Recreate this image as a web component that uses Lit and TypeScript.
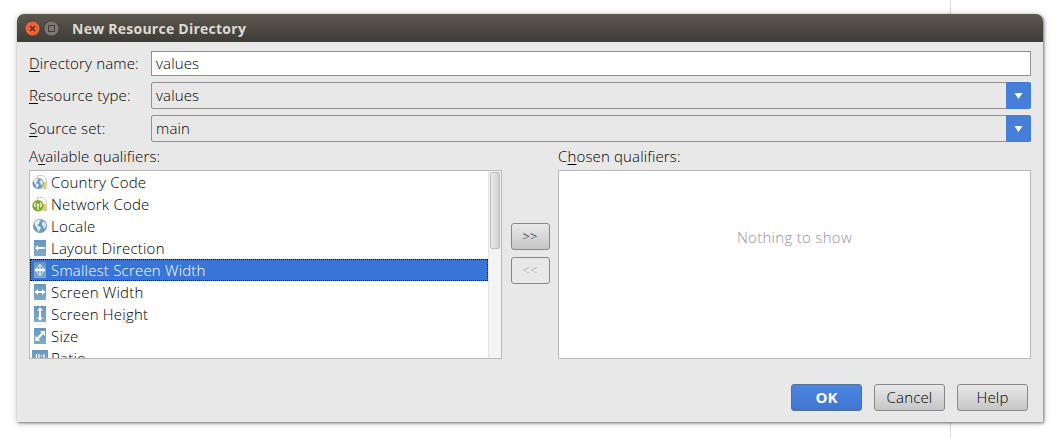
import { html, svg, css, LitElement, nothing } from 'lit';
import { customElement, property } from 'lit/decorators.js';
import { classMap } from 'lit/directives/class-map.js';

const globe = svg`
  <circle cx="8" cy="8" r="7" fill="#6d9cc3" />
  <path d="M2.6 4.4 5 2.3l3-.6.6 1.3-1.8 1 .8 1.2-2.2 1.4.6 1.4 2 .8 1 1.4-1.6 1.8-.6 2-1.2-1.6-.4-2.6L3.2 7.600z" fill="#eef4f8" />
  <path d="M10.200 4.600 12 3.600l1.600 2 .5 2.600-1.300 2.300-1.200-.4-.4-2-1.400-1z" fill="#dce8f1" />
`;
const card = svg`
  <path d="M5.5 1.5h5.600l3.400 3.400v9.600h-9z" fill="#fff" stroke="#cfcfcf" />
  <path d="M11 8h3v6.200h-3z" fill="#f4c822" />
  <path d="M11 10h3M11 12h3" stroke="#fff0a0" stroke-width=".6" />
`;
const tile = svg`<path d="M2 0h12v16H2z" fill="url(#tile)" />`;

const icons = {
  country: svg`${card}<g transform="translate(-.3 3) scale(.8)">${globe}</g>`,
  network: svg`${card}
    <circle cx="6" cy="9.800" r="5.700" fill="#86a830" />
    <circle cx="6" cy="9" r="1.200" fill="#fff" />
    <path d="M6 9.500v4.500M3.700 11.200a3.200 3.200 0 0 1 0-4.400M8.300 11.200a3.200 3.200 0 0 0 0-4.400" fill="none" stroke="#fff" stroke-width="1.100" />`,
  locale: globe,
  direction: svg`${tile}<path d="M3 8l3-3v2h7v2H6v2z" fill="#fff" />`,
  smallest: svg`${tile}
    <path d="M8 1.500l3 3H9v7h2l-3 3-3-3h2v-7H5z" fill="#c2d6e6" />
    <path d="M2.500 8l3-3v2h5V5l3 3-3 3V9h-5v2z" fill="#fff" />`,
  width: svg`${tile}<path d="M2.700 8l3-3v2h4.600V5l3 3-3 3V9H5.700v2z" fill="#fff" />`,
  height: svg`${tile}<path d="M8 1.300l3 3.200H9v7h2l-3 3.200-3-3.200h2v-7H5z" fill="#fff" />`,
  size: svg`${tile}<path d="M13 3v5l-1.800-1.700-4.600 4.600 1.700 1.800h-5v-5L5 9.400l4.600-4.600L7.800 3z" fill="#fff" />`,
  ratio: svg`
    <path d="M0 0h16v16H0z" fill="url(#tile)" />
    <path d="M4.500 4v7M7 4v7M12 4v7M9.500 5v1.500M9.500 8.500V10" stroke="#fff" stroke-width="1.200" />`,
};

interface Qualifier {
  icon: keyof typeof icons;
  label: string;
}

const qualifiers: Qualifier[] = [
  { icon: 'country', label: 'Country Code' },
  { icon: 'network', label: 'Network Code' },
  { icon: 'locale', label: 'Locale' },
  { icon: 'direction', label: 'Layout Direction' },
  { icon: 'smallest', label: 'Smallest Screen Width' },
  { icon: 'width', label: 'Screen Width' },
  { icon: 'height', label: 'Screen Height' },
  { icon: 'size', label: 'Size' },
  { icon: 'ratio', label: 'Ratio' },
];

@customElement('qualifier-list')
export class QualifierList extends LitElement {
  static styles = css`
    :host {
      display: grid;
      grid-template-columns: 1fr 13px;
      box-sizing: border-box;
      height: 189px;
      border: 1px solid #b9b9b9;
      background: #fff;
      letter-spacing: 0.21px;
      overflow: hidden;
    }

    .rows {
      overflow: hidden;
    }

    .row {
      display: flex;
      align-items: center;
      gap: 3px;
      box-sizing: border-box;
      height: 22px;
      padding: 0 1px;
      border: 1px solid transparent;
      white-space: nowrap;
    }

    .row.selected {
      background: #3875d7;
      border: 1px dotted #00091f;
      color: #fff;
    }

    .row svg {
      width: 16px;
      height: 16px;
      flex: none;
    }

    .track {
      box-sizing: border-box;
      padding: 1px;
      background: #f4f4f4;
      border-left: 1px solid #e4e4e4;
    }

    .thumb {
      box-sizing: border-box;
      height: 77px;
      border: 1px solid #bdbdbd;
      border-radius: 2px;
      background: linear-gradient(90deg, #ececec, #cfcfcf);
    }
  `;

  @property() selected = '';

  protected render() {
    return html`
      <div class="rows">
        ${qualifiers.map(
          ({ icon, label }) => html`
            <div class=${classMap({ row: true, selected: label === this.selected })}>
              <svg viewBox="0 0 16 16">
                <linearGradient id="tile" x2="0" y2="1">
                  <stop stop-color="#6a96bd" />
                  <stop offset="1" stop-color="#7fabcb" />
                </linearGradient>
                ${icons[icon]}
              </svg>
              <span>${label}</span>
            </div>
          `
        )}
      </div>
      <div class="track"><div class="thumb"></div></div>
    `;
  }
}

@customElement('app-root')
export class AppRoot extends LitElement {
  static styles = css`
    :host {
      display: block;
      box-sizing: border-box;
      height: 438px;
      padding: 14px 18px 16px 17px;
      background: linear-gradient(#dcdcdc, #dcdcdc) 950px 0 / 1px 100% no-repeat #fff;
      color: #000;
      font: 300 15px/22px 'Open Sans', sans-serif;
      letter-spacing: 0.15px;
    }

    .dialog {
      height: 408px;
      border-radius: 7px 7px 0 0;
      background: #e8e8e8;
      box-shadow: 1px 1px 3px rgb(0 0 0 / 50%), 0 1px 8px rgb(0 0 0 / 18%);
    }

    .titlebar {
      display: flex;
      align-items: center;
      box-sizing: border-box;
      height: 28px;
      padding: 2px 0 0 8px;
      border-radius: 7px 7px 0 0;
      background: linear-gradient(#5c584e, #3d3c37);
      color: #dfdbd2;
      font-size: 14px;
      font-weight: 700;
      letter-spacing: 0.25px;
    }

    .titlebar svg {
      width: 36px;
      height: 18px;
      margin: -2px 11px 0 0;
    }

    .form {
      display: grid;
      grid-template-columns: 122px 880px;
      row-gap: 6px;
      padding: 9px 12px 0;
    }

    .label {
      align-self: center;
      padding-bottom: 2px;
    }

    .field {
      display: flex;
      justify-content: space-between;
      box-sizing: border-box;
      height: 27px;
      padding-left: 4px;
      border: 1px solid #919191;
      border-radius: 2px;
      line-height: 25px;
    }

    .field.text {
      height: 25px;
      border-radius: 0;
      background: #fff;
      line-height: 23px;
    }

    .arrow {
      display: grid;
      place-items: center;
      width: 25px;
      margin: -1px;
      border-radius: 0 2px 2px 0;
      background: #477ed8;
    }

    .arrow svg {
      width: 9px;
      height: 6px;
    }

    .lists {
      display: grid;
      grid-template-columns: 473px 39px 473px;
      justify-content: space-between;
      padding: 3px 12px 0;
    }

    .caption {
      height: 25px;
    }

    .transfer {
      display: grid;
      align-content: start;
      gap: 7px;
      padding-top: 78px;
    }

    .chosen {
      display: grid;
      place-items: center;
      box-sizing: border-box;
      height: 189px;
      padding-bottom: 56px;
      border: 1px solid #b9b9b9;
      background: #fff;
      color: #9b8fa0;
      letter-spacing: 0.3px;
    }

    .button {
      box-sizing: border-box;
      height: 27px;
      border: 1px solid #888;
      border-radius: 3px;
      background: linear-gradient(#e9e9e9, #c6c6c6);
      line-height: 25px;
      text-align: center;
    }

    .button.small {
      font-size: 13px;
    }

    .button.disabled {
      background: #e8e8e8;
      color: #999;
      text-shadow: 1px 1px #fff;
    }

    .button.primary {
      border-color: #566f96;
      background: linear-gradient(#4a85e2, #4076cf);
      color: #fff;
      font-weight: 700;
    }

    .actions {
      display: grid;
      grid-template-columns: repeat(3, 71px);
      justify-content: end;
      gap: 12px;
      padding: 25px 15px 0;
    }

    u {
      text-decoration-thickness: 1px;
      text-underline-offset: 2px;
      text-decoration-skip-ink: none;
    }
  `;

  private field(key: string, rest: string, value: string, select = true) {
    return html`
      <div class="label"><u>${key}</u>${rest}</div>
      <div class=${classMap({ field: true, text: !select })}>
        <span>${value}</span>
        ${select
          ? html`<span class="arrow"><svg viewBox="0 0 9 6"><path d="M.5 0h8l-4 6z" fill="#fff" /></svg></span>`
          : nothing}
      </div>
    `;
  }

  protected render() {
    return html`
      <div class="dialog">
        <div class="titlebar">
          <svg viewBox="0 0 36 18">
            <circle cx="7.5" cy="9.5" r="7.5" fill="#ed6138" stroke="#34332e" stroke-width=".6" />
            <path d="M5 7l5 5M10 7l-5 5" stroke="#53251a" stroke-width="1.2" />
            <circle cx="26.5" cy="9.5" r="7.5" fill="#7c7971" stroke="#34332e" stroke-width=".6" />
            <path d="M23.5 6.5h6v6h-6z" fill="none" stroke="#3b3934" />
          </svg>
          <span>New Resource Directory</span>
        </div>

        <div class="form">
          ${this.field('D', 'irectory name:', 'values', false)}
          ${this.field('R', 'esource type:', 'values')}
          ${this.field('S', 'ource set:', 'main')}
        </div>

        <div class="lists">
          <div>
            <div class="caption">A<u>v</u>ailable qualifiers:</div>
            <qualifier-list selected="Smallest Screen Width"></qualifier-list>
          </div>
          <div class="transfer">
            <div class="button small">&gt;&gt;</div>
            <div class="button small disabled">&lt;&lt;</div>
          </div>
          <div>
            <div class="caption">C<u>h</u>osen qualifiers:</div>
            <div class="chosen">Nothing to show</div>
          </div>
        </div>

        <div class="actions">
          <div class="button primary">OK</div>
          <div class="button">Cancel</div>
          <div class="button">Help</div>
        </div>
      </div>
    `;
  }
}
